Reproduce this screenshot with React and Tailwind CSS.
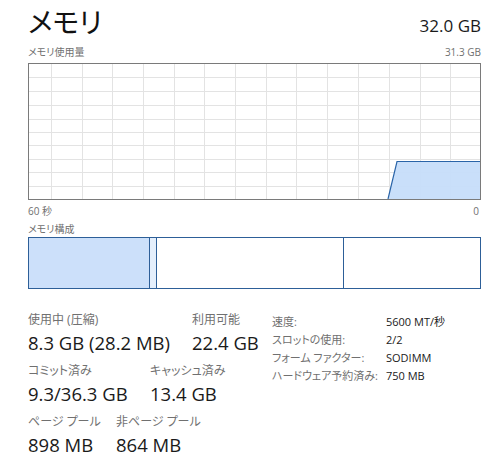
import React from "react";

const F = "font-['Segoe_UI','Open_Sans','Noto_Sans_CJK_JP',sans-serif] [font-feature-settings:'palt']";

function Graph() {
  const vx = [51, 82, 112, 143, 174, 204, 235, 266, 296, 327, 358, 389, 420, 450].map((x) => x - 29);
  const hy = [74, 88, 102, 116, 129, 142, 156, 169, 183].map((y) => y - 61);
  return (
    <div className="h-[137px] border border-[#7a7a7a] bg-white">
      <svg width="451" height="135" viewBox="0 0 451 135" className="block">
        {vx.map((x) => (
          <line key={"v" + x} x1={x + 0.5} y1="0" x2={x + 0.5} y2="135" stroke="#e3e3e3" strokeWidth="1" />
        ))}
        {hy.map((y) => (
          <line key={"h" + y} x1="0" y1={y + 0.5} x2="451" y2={y + 0.5} stroke="#e3e3e3" strokeWidth="1" />
        ))}
        <path d="M359 135 L368 97.5 L451 97.5 L451 135 Z" fill="#c6ddfa" fillOpacity="0.95" />
        <path d="M359 135 L368 97.5 L451 97.5" fill="none" stroke="#2a64a8" strokeWidth="1.2" />
      </svg>
    </div>
  );
}

function Stat({ label, value, className = "" }) {
  return (
    <div className={`flex flex-col whitespace-nowrap ${className}`}>
      <div className="text-[12px] leading-[16px] text-[#707070]">{label}</div>
      <div className="mt-[3px] text-[18.5px] leading-[24px] text-[#1a1a1a]">{value}</div>
    </div>
  );
}

export default function App() {
  return (
    <div className={`w-[492px] h-[457px] bg-white overflow-hidden pl-[28px] pr-[11px] ${F}`}>
      <div className="flex items-end justify-between pt-[3px]">
        <div className="text-[28px] leading-[38px] text-[#111]">メモリ</div>
        <div className="text-[17px] leading-[22px] text-[#1a1a1a] mb-[4px]">32.0 GB</div>
      </div>
      <div className="flex justify-between text-[10px] leading-[14px] text-[#707070] mt-[4px]">
        <span>メモリ使用量</span>
        <span>31.3 GB</span>
      </div>
      <div className="mt-[4px]">
        <Graph />
      </div>
      <div className="flex justify-between text-[10px] leading-[14px] text-[#707070] mt-[4px]">
        <span>60 秒</span>
        <span className="pr-[2px]">0</span>
      </div>
      <div className="text-[10px] leading-[14px] text-[#707070] mt-[4px]">メモリ構成</div>
      <div className="mt-[1px] flex h-[52px] border border-[#2d5f98]">
        <div className="w-[121px] bg-[#cce0fa] border-r border-[#2d5f98]"></div>
        <div className="w-[7px] bg-[#e4effc] border-r border-[#2d5f98]"></div>
        <div className="w-[187px] border-r border-[#2d5f98]"></div>
        <div className="flex-1"></div>
      </div>
      <div className="flex items-start mt-[23px]">
        <div className="w-[244px] flex flex-col">
          <div className="flex">
            <Stat className="w-[164px]" label="使用中 (圧縮)" value="8.3 GB (28.2 MB)" />
            <Stat label="利用可能" value="22.4 GB" />
          </div>
          <div className="flex mt-[8px]">
            <Stat className="w-[122px]" label="コミット済み" value="9.3/36.3 GB" />
            <Stat label="キャッシュ済み" value="13.4 GB" />
          </div>
          <div className="flex mt-[8px]">
            <Stat className="w-[88px]" label="ページ プール" value="898 MB" />
            <Stat label="非ページ プール" value="864 MB" />
          </div>
        </div>
        <div className="grid grid-cols-[114px_1fr] content-start text-[11px] leading-[18px] mt-[1px]">
          <div className="text-[#707070]">速度:</div>
          <div className="text-[#1a1a1a]">5600 MT/秒</div>
          <div className="text-[#707070]">スロットの使用:</div>
          <div className="text-[#1a1a1a]">2/2</div>
          <div className="text-[#707070]">フォーム ファクター:</div>
          <div className="text-[#1a1a1a]">SODIMM</div>
          <div className="text-[#707070]">ハードウェア予約済み:</div>
          <div className="text-[#1a1a1a]">750 MB</div>
        </div>
      </div>
    </div>
  );
}
